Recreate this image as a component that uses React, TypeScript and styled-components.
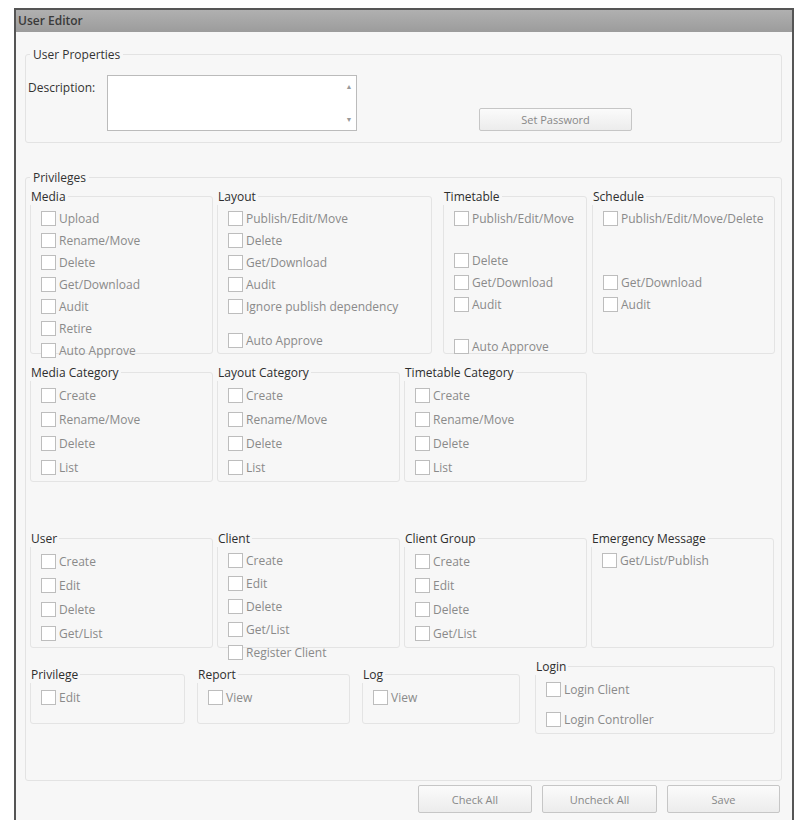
import React from "react";
import styled, { createGlobalStyle } from "styled-components";

const Global = createGlobalStyle`
  body { margin: 0; background: #fff; font-family: "Open Sans", "Liberation Sans", sans-serif; }
`;

const Window = styled.div`
  margin: 8px 10px 0 14px;
  width: 780px;
  height: 812px;
  border: 2px solid #555;
  border-bottom: none;
  background: #f7f7f7;
  box-sizing: border-box;
  display: flex;
  flex-direction: column;
`;
const TitleBar = styled.div`
  height: 22px;
  background: linear-gradient(#b0b0b0, #9c9c9c);
  color: #3a3a3a;
  font-size: 12px;
  font-weight: 600;
  line-height: 22px;
  padding-left: 2px;
`;
const Body = styled.div`
  padding: 14px 10px 0 9px;
  display: flex;
  flex-direction: column;
`;
const Fieldset = styled.fieldset<{ $h: number }>`
  margin: 0;
  border: 1px solid #e3e3e3;
  border-radius: 3px;
  height: ${(p) => p.$h}px;
  box-sizing: border-box;
  padding: 0;
`;
const Legend = styled.legend`
  font-size: 12px;
  color: #333;
  padding: 0 3px;
  margin-left: 4px;
`;
const PropsRow = styled.div`
  display: flex;
  align-items: flex-start;
  padding: 12px 0 0 2px;
`;
const Label = styled.span`
  font-size: 12px;
  color: #333;
  width: 79px;
  margin-top: 4px;
`;
const TextArea = styled.div`
  width: 250px;
  height: 56px;
  border: 1px solid #bbb;
  background: #fff;
  box-sizing: border-box;
  display: flex;
  justify-content: flex-end;
`;
const Scroll = styled.div`
  width: 14px;
  display: flex;
  flex-direction: column;
  justify-content: space-between;
  align-items: center;
  font-size: 7px;
  color: #999;
  padding: 6px 0;
`;
const Button = styled.button<{ $w: number }>`
  width: ${(p) => p.$w}px;
  height: 28px;
  border: 1px solid #c6c6c6;
  border-radius: 2px;
  background: linear-gradient(#fbfbfb, #ececec);
  color: #888;
  font-family: "Open Sans", "Liberation Sans", sans-serif;
  font-size: 11px;
`;
const SmallButton = styled(Button)`
  height: 23px;
  margin: 33px 0 0 122px;
`;
const Row = styled.div<{ $mt: number }>`
  display: flex;
  margin: ${(p) => p.$mt}px 0 0 4px;
  align-items: flex-start;
`;
const Group = styled.fieldset<{ $w: number; $h: number; $ml: number }>`
  margin: 0 0 0 ${(p) => p.$ml}px;
  width: ${(p) => p.$w}px;
  height: ${(p) => p.$h}px;
  box-sizing: border-box;
  border: 1px solid #e4e4e4;
  border-radius: 3px;
  padding: 2px 0 0 10px;
  display: flex;
  flex-direction: column;
`;
const GLegend = styled.legend`
  font-size: 12px;
  color: #2e2e2e;
  padding: 0 2px;
  margin-left: -12px;
`;
const Item = styled.label<{ $h: number }>`
  display: flex;
  align-items: center;
  flex: none;
  height: ${(p) => p.$h}px;
  font-size: 12px;
  color: #8a8a8a;
  white-space: nowrap;
`;
const Box = styled.span`
  width: 13px;
  height: 13px;
  border: 1px solid #bdbdbd;
  background: #fff;
  margin-right: 3px;
  flex: none;
`;
const Gap = styled.div<{ $h: number }>`
  height: ${(p) => p.$h}px;
  flex: none;
`;
const LoginWrap = styled.div`
  margin-top: -8px;
`;
const Footer = styled.div`
  display: flex;
  gap: 10px;
  justify-content: flex-end;
  margin: 4px 2px 0 0;
`;

type Entry = string | number;
const G = ({ t, w, h, ml = 0, items, gap = 22 }: { t: string; w: number; h: number; ml?: number; items: Entry[]; gap?: number }) => (
  <Group $w={w} $h={h} $ml={ml}>
    <GLegend>{t}</GLegend>
    {items.map((it, i) =>
      typeof it === "number" ? (
        <Gap key={i} $h={it} />
      ) : (
        <Item key={i} $h={gap}>
          <Box />
          {it}
        </Item>
      )
    )}
  </Group>
);

export default function App() {
  return (
    <>
      <Global />
      <Window>
        <TitleBar>User Editor</TitleBar>
        <Body>
          <Fieldset $h={97}>
            <Legend>User Properties</Legend>
            <PropsRow>
              <Label>Description:</Label>
              <TextArea>
                <Scroll>
                  <span>▲</span>
                  <span>▼</span>
                </Scroll>
              </TextArea>
              <SmallButton $w={153}>Set Password</SmallButton>
            </PropsRow>
          </Fieldset>
          <Fieldset $h={612} style={{ marginTop: 26 }}>
            <Legend>Privileges</Legend>
            <Row $mt={2}>
              <G t="Media" w={183} h={166} items={["Upload", "Rename/Move", "Delete", "Get/Download", "Audit", "Retire", "Auto Approve"]} />
              <G t="Layout" w={215} h={166} ml={4} items={["Publish/Edit/Move", "Delete", "Get/Download", "Audit", "Ignore publish dependency", 12, "Auto Approve"]} />
              <G t="Timetable" w={144} h={166} ml={11} items={["Publish/Edit/Move", 20, "Delete", "Get/Download", "Audit", 20, "Auto Approve"]} />
              <G t="Schedule" w={183} h={166} ml={5} items={["Publish/Edit/Move/Delete", 42, "Get/Download", "Audit"]} />
            </Row>
            <Row $mt={10}>
              <G t="Media Category" w={183} h={118} items={["Create", "Rename/Move", "Delete", "List"]} gap={24} />
              <G t="Layout Category" w={183} h={118} ml={4} items={["Create", "Rename/Move", "Delete", "List"]} gap={24} />
              <G t="Timetable Category" w={183} h={118} ml={4} items={["Create", "Rename/Move", "Delete", "List"]} gap={24} />
            </Row>
            <Row $mt={48}>
              <G t="User" w={183} h={118} items={["Create", "Edit", "Delete", "Get/List"]} gap={24} />
              <G t="Client" w={183} h={118} ml={4} items={["Create", "Edit", "Delete", "Get/List", "Register Client"]} gap={23} />
              <G t="Client Group" w={183} h={118} ml={4} items={["Create", "Edit", "Delete", "Get/List"]} gap={24} />
              <G t="Emergency Message" w={183} h={118} ml={4} items={["Get/List/Publish"]} />
            </Row>
            <Row $mt={18}>
              <G t="Privilege" w={155} h={58} items={["Edit"]} gap={24} />
              <G t="Report" w={153} h={58} ml={12} items={["View"]} gap={24} />
              <G t="Log" w={158} h={58} ml={12} items={["View"]} gap={24} />
              <LoginWrap>
                <G t="Login" w={240} h={76} ml={15} items={["Login Client", 6, "Login Controller"]} gap={24} />
              </LoginWrap>
            </Row>
          </Fieldset>
          <Footer>
            <Button $w={114}>Check All</Button>
            <Button $w={115}>Uncheck All</Button>
            <Button $w={113}>Save</Button>
          </Footer>
        </Body>
      </Window>
    </>
  );
}
